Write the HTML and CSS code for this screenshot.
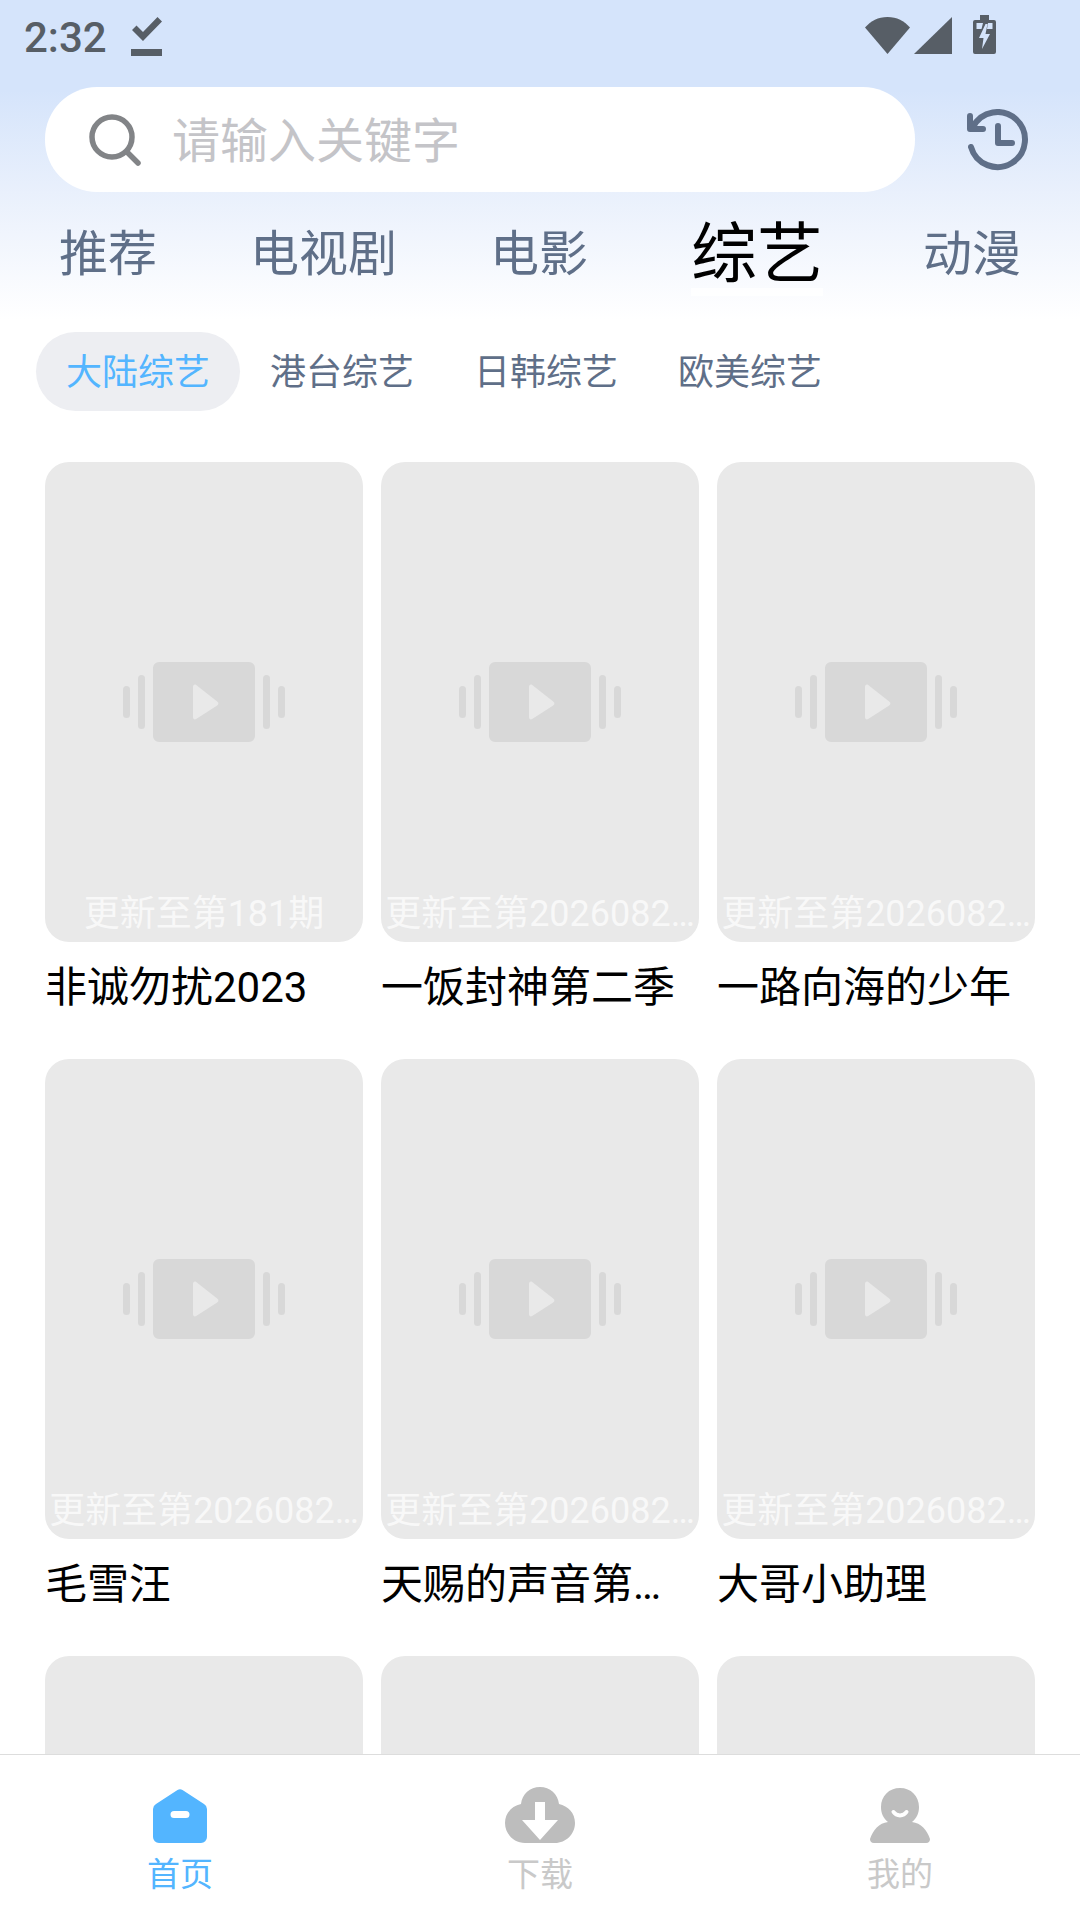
FILE: index.html
```html
<!DOCTYPE html>
<html lang="zh-CN">
<head>
    <meta charset="UTF-8">
    <meta name="viewport" content="width=device-width, initial-scale=1.0">
    <title>综艺</title>
    <link rel="stylesheet" href="styles.css">
</head>
<body>
    <svg class="sprite" width="0" height="0">
        <symbol id="placeholder" viewBox="0 0 162 80">
            <rect x="0" y="24" width="7" height="32" rx="3.5"/>
            <rect x="15" y="13" width="7" height="54" rx="3.5"/>
            <path fill-rule="evenodd" d="M36 0h90a6 6 0 0 1 6 6v68a6 6 0 0 1-6 6H36a6 6 0 0 1-6-6V6a6 6 0 0 1 6-6zM70 25v30c0 2 1.500 3 3.200 2l21-13.500c1.600-1 1.600-3 0-4l-21-16.500c-1.700-1-3.200 0-3.200 2z"/>
            <rect x="140" y="13" width="7" height="54" rx="3.500"/>
            <rect x="155" y="24" width="7" height="32" rx="3.500"/>
        </symbol>
    </svg>

    <div class="page">
        <header class="top">
            <!-- Status bar -->
            <div class="status">
                <span class="clock">2:32</span>
                <svg class="status-check" width="31" height="39" viewBox="0 0 31 39">
                    <path d="M0 32h31v7H0zM1 13l4.500-4.500L12 15 26.500 0 31 4.500 12 24z"/>
                </svg>
                <div class="status-right">
                    <svg width="45" height="37" viewBox="0 0 45 37"><path d="M0 10.500C6 4 13 0 22.500 0S39 4 45 10.500L22.500 37z"/></svg>
                    <svg width="38" height="37" viewBox="0 0 38 37"><path d="M38 0v37H0z"/></svg>
                    <svg class="status-battery" width="23" height="39" viewBox="0 0 23 39">
                        <path fill-rule="evenodd" d="M7 0h9v5h5a2 2 0 0 1 2 2v30a2 2 0 0 1-2 2H2a2 2 0 0 1-2-2V7a2 2 0 0 1 2-2h5zM3.500 8v6h5l1.500-6zM15 8l-1 6h5.500V8zM12.500 9L6 23h4.500L9 34l8-15h-4.500l2-10z"/>
                    </svg>
                </div>
            </div>

            <!-- Search -->
            <div class="search-row">
                <div class="search">
                    <svg width="52" height="52" viewBox="0 0 52 52">
                        <circle cx="23" cy="23" r="20" fill="none" stroke="#828487" stroke-width="5.500"/>
                        <path d="M38 38l11 11" stroke="#828487" stroke-width="5.500" stroke-linecap="round"/>
                    </svg>
                    <span class="search-text">请输入关键字</span>
                </div>
                <svg class="history" width="62" height="62" viewBox="0 0 62 62" fill="none" stroke="#5f6f88" stroke-width="6" stroke-linecap="round" stroke-linejoin="round">
                    <path d="M6 18A27.500 27.500 0 1 1 4 38"/>
                    <path d="M3 7v13h13"/>
                    <path d="M31 17v17h14"/>
                </svg>
            </div>

            <nav class="tabs">
                <span class="tab">推荐</span>
                <span class="tab">电视剧</span>
                <span class="tab">电影</span>
                <span class="tab tab-active">综艺</span>
                <span class="tab">动漫</span>
            </nav>
        </header>

        <main class="content">
            <div class="chips">
                <span class="chip chip-active">大陆综艺</span>
                <span class="chip">港台综艺</span>
                <span class="chip">日韩综艺</span>
                <span class="chip">欧美综艺</span>
            </div>

            <div class="grid">
                <div class="card">
                    <div class="poster">
                        <svg class="poster-icon"><use href="#placeholder"/></svg>
                        <div class="poster-label">更新至第181期</div>
                    </div>
                    <div class="card-title">非诚勿扰2023</div>
                </div>
                <div class="card">
                    <div class="poster">
                        <svg class="poster-icon"><use href="#placeholder"/></svg>
                        <div class="poster-label">更新至第2026082…</div>
                    </div>
                    <div class="card-title">一饭封神第二季</div>
                </div>
                <div class="card">
                    <div class="poster">
                        <svg class="poster-icon"><use href="#placeholder"/></svg>
                        <div class="poster-label">更新至第2026082…</div>
                    </div>
                    <div class="card-title">一路向海的少年</div>
                </div>
                <div class="card">
                    <div class="poster">
                        <svg class="poster-icon"><use href="#placeholder"/></svg>
                        <div class="poster-label">更新至第2026082…</div>
                    </div>
                    <div class="card-title">毛雪汪</div>
                </div>
                <div class="card">
                    <div class="poster">
                        <svg class="poster-icon"><use href="#placeholder"/></svg>
                        <div class="poster-label">更新至第2026082…</div>
                    </div>
                    <div class="card-title">天赐的声音第…</div>
                </div>
                <div class="card">
                    <div class="poster">
                        <svg class="poster-icon"><use href="#placeholder"/></svg>
                        <div class="poster-label">更新至第2026082…</div>
                    </div>
                    <div class="card-title">大哥小助理</div>
                </div>
                <div class="card"><div class="poster"></div></div>
                <div class="card"><div class="poster"></div></div>
                <div class="card"><div class="poster"></div></div>
            </div>
        </main>

        <!-- Bottom navigation -->
        <footer class="bottom">
            <div class="bottom-item bottom-active">
                <div class="bottom-icon">
                    <svg width="54" height="54" viewBox="0 0 54 54">
                        <path fill-rule="evenodd" d="M24.500 1a5 5 0 0 1 5 0L51 15a6 6 0 0 1 3 5v28a6 6 0 0 1-6 6H6a6 6 0 0 1-6-6V20a6 6 0 0 1 3-5zM21 22a3.500 3.500 0 0 0 0 7h12a3.500 3.500 0 0 0 0-7z" fill="#53b5ff"/>
                    </svg>
                </div>
                <span>首页</span>
            </div>
            <div class="bottom-item">
                <div class="bottom-icon">
                    <svg width="70" height="56" viewBox="0 0 70 56">
                        <path fill-rule="evenodd" d="M35 0c10 0 18 7 19 17 9 2 16 9 16 19 0 11-9 20-20 20H20C9 56 0 47 0 36c0-10 7-17 16-19C17 7 25 0 35 0zM30 15v18H17l18 20 18-20H40V15z" fill="#bdbdbd"/>
                    </svg>
                </div>
                <span>下载</span>
            </div>
            <div class="bottom-item">
                <div class="bottom-icon">
                    <svg width="60" height="55" viewBox="0 0 60 55">
                        <path d="M30 0c11 0 19 8 19 19 0 6-2 11-7 15 9 1 15 8 18 17 0 2-1 4-4 4H4c-3 0-4-2-4-4 3-9 9-16 18-17-5-4-7-9-7-15C11 8 19 0 30 0z" fill="#bdbdbd"/>
                        <path d="M23.500 24c3 4.500 10 4.500 13 0" fill="none" stroke="#ffffff" stroke-width="4" stroke-linecap="round"/>
                    </svg>
                </div>
                <span>我的</span>
            </div>
        </footer>
    </div>
</body>
</html>
```

FILE: styles.css
```css
* {
    box-sizing: border-box;
}

body {
    margin: 0;
    font-family: Roboto, "Noto Sans CJK SC", sans-serif;
    background-color: #ffffff;
}

.sprite {
    display: block;
    height: 0;
}

.page {
    width: 1080px;
    height: 1920px;
    display: flex;
    flex-direction: column;
    overflow: hidden;
}

/* Header with the blue fade */
.top {
    height: 320px;
    flex-shrink: 0;
    background: linear-gradient(180deg, #d5e4fb 0, #d5e4fb 90px, #e9f0fc 192px, #ffffff 320px);
}

.status {
    height: 87px;
    padding: 15px 84px 0 24px;
    display: flex;
    align-items: flex-start;
    color: #575e66;
}

.clock {
    font-size: 42px;
    font-weight: 500;
    line-height: 44px;
    width: 107px;
    margin-top: 1px;
}

.status-check {
    fill: #575e66;
    margin-top: 2px;
}

.status-right {
    margin-left: auto;
    display: flex;
    align-items: flex-start;
    fill: #575e66;
    gap: 4px;
    padding-top: 2px;
}

.status-battery {
    margin-left: 17px;
    margin-top: -2px;
}

.search-row {
    height: 105px;
    padding-left: 45px;
    display: flex;
    align-items: center;
}

.search {
    width: 870px;
    height: 105px;
    border-radius: 52px;
    background-color: #ffffff;
    display: flex;
    align-items: center;
    padding-left: 44px;
}

.search-text {
    margin: -6px 0 0 31px;
    font-size: 48px;
    color: #c4c4c8;
}

.history {
    margin-left: 52px;
}

.tabs {
    height: 128px;
    padding: 0 0 2px 59px;
    display: flex;
    align-items: center;
    gap: 93px;
}

.tab {
    font-size: 49px;
    line-height: 60px;
    color: #5f6f88;
    white-space: nowrap;
}

.tab-active {
    position: relative;
    font-size: 66px;
    line-height: 78px;
    color: #000000;
    margin: 0 7px 0 10px;
}

.tab-active::after {
    content: "";
    position: absolute;
    left: 0;
    right: 0;
    bottom: -2px;
    height: 8px;
    background-color: rgba(255, 255, 255, 0.8);
}

/* Filter chips and card grid */
.content {
    flex: 1;
    min-height: 0;
    overflow: hidden;
}

.chips {
    margin-top: 12px;
    padding-left: 36px;
    display: flex;
}

.chip {
    height: 79px;
    width: 204px;
    line-height: 83px;
    text-align: center;
    font-size: 36px;
    color: #5f6f88;
}

.chip-active {
    border-radius: 40px;
    background-color: #edeef2;
    color: #53b5ff;
}

.grid {
    margin-top: 51px;
    padding: 0 45px;
    display: grid;
    grid-template-columns: repeat(3, 318px);
    column-gap: 18px;
}

.card {
    height: 597px;
    min-width: 0;
}

.poster {
    position: relative;
    height: 480px;
    border-radius: 24px;
    background-color: #e9e9e9;
    display: flex;
    align-items: center;
    justify-content: center;
    overflow: hidden;
    fill: #d8d8d8;
}

.poster-icon {
    width: 162px;
    height: 80px;
}

.poster-label {
    position: absolute;
    left: 0;
    right: 0;
    bottom: 3px;
    font-size: 36px;
    line-height: 50px;
    text-align: center;
    color: rgba(255, 255, 255, 0.7);
    white-space: nowrap;
}

.card-title {
    margin-top: 17px;
    font-size: 42px;
    line-height: 58px;
    color: #000000;
    white-space: nowrap;
}

.bottom {
    height: 166px;
    flex-shrink: 0;
    border-top: 1px solid #dddddd;
    background-color: #ffffff;
    display: grid;
    grid-template-columns: repeat(3, 360px);
}

.bottom-item {
    padding-top: 32px;
    display: flex;
    flex-direction: column;
    align-items: center;
    font-size: 33px;
    line-height: 44px;
    color: #c9c9c9;
}

.bottom-icon {
    height: 56px;
    display: flex;
    align-items: flex-end;
    flex-shrink: 0;
}

.bottom-icon svg {
    display: block;
}

.bottom-item span {
    margin-top: 10px;
}

.bottom-active {
    color: #53b5ff;
}
```
